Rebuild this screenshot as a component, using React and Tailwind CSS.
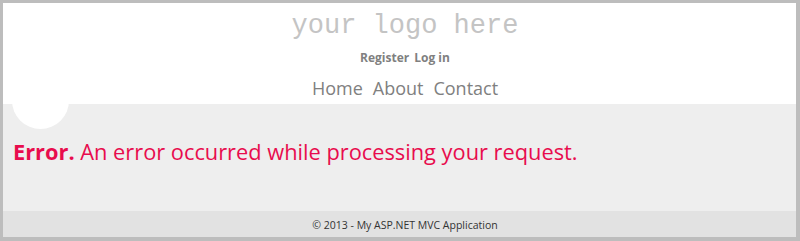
export default function App() {
  return (
    <div className="relative flex h-[241px] w-[800px] flex-col overflow-hidden border-t-[3px] border-l-[3px] border-r-4 border-b-4 border-[#bdbdbd] font-['Open_Sans',sans-serif]">
      {/* Header */}
      <header className="flex h-[101px] flex-col items-center bg-white pl-[11px]">
        <div className="mt-[7px] font-['Liberation_Mono',monospace] text-[27px] leading-[32px] text-[#c4c4c4]">
          your logo here
        </div>
        <div className="mt-[9px] flex gap-[5px] text-[12px] font-bold leading-[14px] text-[#808080]">
          <a>Register</a>
          <a>Log in</a>
        </div>
        <nav className="mt-[11px] flex gap-[10px] text-[18px] leading-[24px] text-[#808080]">
          <a>Home</a>
          <a>About</a>
          <a>Contact</a>
        </nav>
      </header>

      <div className="absolute left-[9px] top-[69px] h-[57px] w-[57px] rounded-full bg-white" />

      {/* Body */}
      <main className="flex-1 bg-[#eeeeee] px-[10px] pt-[34px]">
        <p className="text-[21.8px] leading-[28px] text-[#e80c4d]">
          <span className="font-bold">Error.</span> An error occurred while processing your request.
        </p>
      </main>

      {/* Footer */}
      <footer className="flex h-[26px] items-center justify-center bg-[#e2e2e2] pl-[11px] pt-[3px] text-[10.5px] text-[#333333]">
        © 2013 - My ASP.NET MVC Application
      </footer>
    </div>
  );
}
